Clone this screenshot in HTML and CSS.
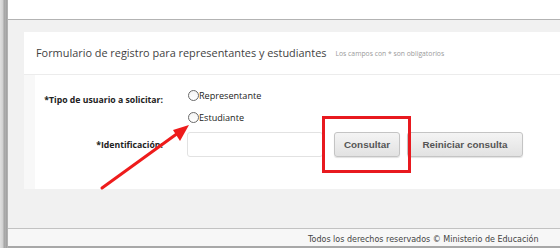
FILE: index.html
```html
<!DOCTYPE html>
<html lang="es">
<head>
<meta charset="utf-8">
<title>Formulario de registro</title>
<link rel="stylesheet" href="styles.css">
</head>
<body>
<div class="window">
  <div class="frame"></div>
  <div class="page">
    <div class="topbar"></div>
    <main class="content">
      <section class="card">
        <header class="card-head">
          <h1 class="title">Formulario de registro para representantes y estudiantes</h1>
          <span class="note">Los campos con * son obligatorios</span>
        </header>
        <div class="card-body">
          <div class="row row-type">
            <label class="label">*Tipo de usuario a solicitar:</label>
            <div class="radios">
              <label class="radio"><span class="dot"></span>Representante</label>
              <label class="radio"><span class="dot"></span>Estudiante</label>
            </div>
          </div>
          <div class="row row-id">
            <label class="label">*Identificación:</label>
            <input class="input" type="text">
            <button class="btn btn-consult">Consultar</button>
            <button class="btn btn-reset">Reiniciar consulta</button>
          </div>
        </div>
      </section>
    </main>
    <footer class="footer">Todos los derechos reservados © Ministerio de Educación</footer>
  </div>
  <div class="mark-box"></div>
  <svg class="mark-arrow" width="560" height="248" viewBox="0 0 560 248">
    <line x1="102" y1="188" x2="178" y2="133" stroke="#ee1c1c" stroke-width="3" stroke-linecap="round"/>
    <polygon points="189,125 173,130 180,141" fill="#ee1c1c"/>
  </svg>
</div>
</body>
</html>
```
FILE: styles.css
```css
html, body {
  margin: 0;
  padding: 0;
  width: 560px;
  height: 248px;
  overflow: hidden;
  background: #fff;
}
.window {
  position: relative;
  display: flex;
  width: 560px;
  height: 248px;
}
.frame {
  width: 8px;
  flex: none;
  background: linear-gradient(to right, #e0e0e0 0, #d0d0d0 3px, #a4a4a4 4px, #b0b0b0 6px, #969696 7px, #cccccc 8px);
}
.page {
  flex: 1;
  display: flex;
  flex-direction: column;
  min-width: 0;
}
.topbar {
  height: 19px;
  background: #fff;
  border-bottom: 1px solid #b3b3b3;
  flex: none;
}
.content {
  flex: 1;
  background: #f1f1f1;
  padding: 12px 0 0 16px;
  overflow: hidden;
}
.card {
  background: #fff;
  width: 600px;
  height: 157px;
  display: flex;
  flex-direction: column;
}
.card-head {
  height: 43px;
  flex: none;
  box-sizing: border-box;
  border-bottom: 1px solid #ececec;
  display: flex;
  align-items: center;
  padding: 0 0 2px 12px;
  gap: 9px;
}
.title {
  margin: 0;
  font-family: "Open Sans", "DejaVu Sans", sans-serif;
  font-weight: 400;
  font-size: 10.9px;
  color: #3f3f3f;
  white-space: nowrap;
}
.note {
  font-family: "Open Sans", sans-serif;
  font-size: 6.8px;
  color: #9a9a9a;
  padding-top: 2px;
  white-space: nowrap;
}
.card-body {
  flex: 1;
  border-left: 11px solid #f8f8f8;
  padding-top: 13px;
  font-family: "Open Sans", "DejaVu Sans", sans-serif;
  color: #222;
}
.row {
  display: flex;
  align-items: center;
}
.label {
  width: 128px;
  flex: none;
  text-align: right;
  font-weight: 700;
  font-size: 8.7px;
  color: #222;
  margin-right: 24px;
  white-space: nowrap;
}
.row-type {
  align-items: flex-start;
  height: 44px;
}
.row-type .label {
  margin-top: 6px;
}
.radios {
  display: flex;
  flex-direction: column;
  gap: 8px;
}
.radio {
  display: flex;
  align-items: center;
  font-size: 9.1px;
  color: #222;
  height: 14px;
  white-space: nowrap;
}
.dot {
  width: 9px;
  height: 9px;
  border: 1px solid #6a6a6a;
  border-radius: 50%;
  background: linear-gradient(#f4f4f4, #fff);
  margin-left: 1px;
  flex: none;
}
.row-id {
  height: 25px;
}
.input {
  width: 136px;
  height: 25px;
  box-sizing: border-box;
  border: 1px solid #e2e2e2;
  border-radius: 3px;
  background: #fff;
  margin: 0 11px 0 0;
  padding: 0;
}
.btn {
  height: 25px;
  box-sizing: border-box;
  border: 1px solid #c4c4c4;
  border-radius: 3px;
  background: linear-gradient(#f4f4f4, #e2e2e2);
  box-shadow: 0 1px 1px rgba(0,0,0,0.12);
  font-family: "Liberation Sans", Arial, sans-serif;
  font-weight: 700;
  font-size: 9.9px;
  color: #555;
  padding: 0;
  margin: 0 7px 0 0;
}
.btn-consult { width: 66px; }
.btn-reset { width: 116px; }
.footer {
  height: 20px;
  flex: none;
  box-sizing: border-box;
  border-top: 1px solid #c2c2c2;
  border-bottom: 2px solid #a8a8a8;
  background: #f7f7f7;
  font-family: "DejaVu Sans", sans-serif;
  font-size: 8px;
  color: #444;
  padding: 6px 0 0 300px;
  white-space: nowrap;
  overflow: hidden;
}
.mark-box {
  position: absolute;
  left: 322px;
  top: 116px;
  width: 89px;
  height: 57px;
  box-sizing: border-box;
  border: 3px solid #e8191f;
}
.mark-arrow {
  position: absolute;
  left: 0;
  top: 0;
  pointer-events: none;
}
```
